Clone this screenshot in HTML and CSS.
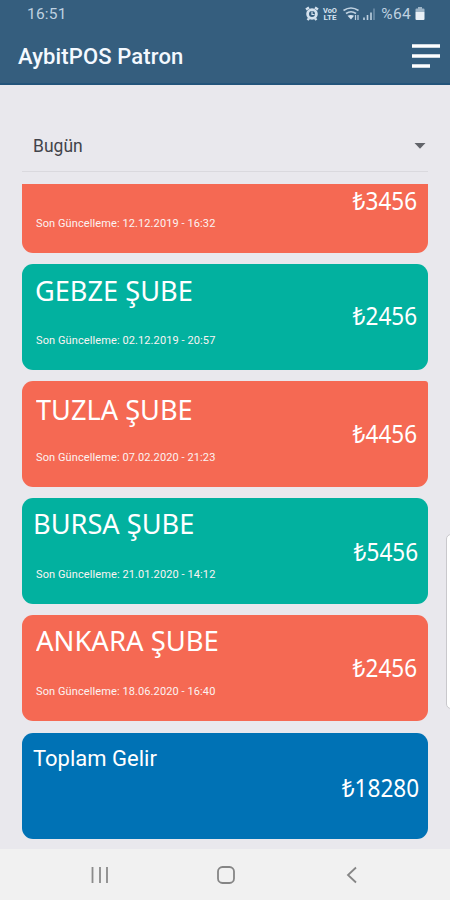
FILE: index.html
```html
<!doctype html>
<html lang="tr">
<head>
<meta charset="utf-8">
<meta name="viewport" content="width=device-width">
<title>AybitPOS Patron</title>
<link rel="stylesheet" href="styles.css">
</head>
<body>

<header>
<div class="statusbar">
<span class="clock">16:51</span>
<svg class="icons" width="70" height="16" viewBox="0 0 70 16">
<!-- alarm -->
<circle cx="7" cy="8" r="4.400" fill="#355e7e" stroke="#d5e2ee" stroke-width="2.800"/>
<path d="M1 3.500L4 1.500M13 3.500L10 1.500M2.500 14l1.500-1.500M11.500 14L10 12.500" stroke="#d5e2ee" stroke-width="2.400"/>
<path d="M7 5.500v3h2.500" fill="none" stroke="#d5e2ee" stroke-width="1.200"/>
<text class="volte" x="18" y="6.500" textLength="14" lengthAdjust="spacingAndGlyphs">VoO</text>
<text class="volte" x="18.500" y="14" textLength="13" lengthAdjust="spacingAndGlyphs">LTE</text>
<!-- wifi -->
<path d="M38.500 4.500Q46-0.500 53.500 4.500M41 7.500Q46 4 51 7.500" fill="none" stroke="#bfd1e0" stroke-width="1.700"/>
<path d="M42.500 9.800Q46 8 49 9.800L46 13.500z" fill="#d5e2ee"/>
<path d="M50.500 9v5M53 9v5" stroke="#bfd1e0" stroke-width="1.200"/>
<!-- signal -->
<path d="M59 11.500v2.500M62.500 9v5M66 6.500v7.500" stroke="#bfd1e0" stroke-width="1.600"/>
<path d="M69 2.500v11.500" stroke="#7091ab" stroke-width="1.500"/>
</svg>
<span class="percent">%64</span>
<svg class="battery" width="10" height="14" viewBox="0 0 10 14">
<path d="M3 0h4v1.500h1.500q1 0 1 1V5h-9V2.500q0-1 1-1H3z" fill="#9db4c6"/>
<path d="M.5 5h9v7q0 1-1 1h-7q-1 0-1-1z" fill="#e9f0f6"/>
</svg>
</div>
<div class="appbar">
<h1>AybitPOS Patron</h1>
<svg width="30" height="26" viewBox="0 0 30 26">
<path d="M1 3h28M1 13h28M1 23h18" stroke="#fff" stroke-width="3.600"/>
</svg>
</div>
</header>

<div class="content">
<div class="period">
<span>Bugün</span>
<svg width="12" height="6" viewBox="0 0 12 6"><path d="M.5 0h11L6 5.800z" fill="#62646a"/></svg>
</div>

<div class="branches">
<div class="card red cut">
<p class="updated">Son Güncelleme: 12.12.2019 - 16:32</p>
<p class="amount">₺3456</p>
</div>
<div class="card green gebze">
<h2>GEBZE ŞUBE</h2>
<p class="updated">Son Güncelleme: 02.12.2019 - 20:57</p>
<p class="amount">₺2456</p>
</div>
<div class="card red square tuzla">
<h2>TUZLA ŞUBE</h2>
<p class="updated">Son Güncelleme: 07.02.2020 - 21:23</p>
<p class="amount">₺4456</p>
</div>
<div class="card green bursa">
<h2>BURSA ŞUBE</h2>
<p class="updated">Son Güncelleme: 21.01.2020 - 14:12</p>
<p class="amount">₺5456</p>
</div>
<div class="card red ankara">
<h2>ANKARA ŞUBE</h2>
<p class="updated">Son Güncelleme: 18.06.2020 - 16:40</p>
<p class="amount">₺2456</p>
</div>
<div class="card blue total">
<h2>Toplam Gelir</h2>
<p class="amount">₺18280</p>
</div>
</div>
</div>

<div class="edgepanel"></div>

<footer>
<svg width="18" height="18" viewBox="0 0 18 18"><path d="M1.500 1v16M9 1v16M16 1v16" stroke="#8b8b8b" stroke-width="1.800"/></svg>
<svg width="18" height="18" viewBox="0 0 18 18"><rect x="1" y="1" width="16" height="16" rx="4.500" fill="none" stroke="#858585" stroke-width="1.800"/></svg>
<svg width="18" height="18" viewBox="0 0 18 18"><path d="M13 1.500L5 9l8 7.500" fill="none" stroke="#858585" stroke-width="1.800"/></svg>
</footer>

</body>
</html>
```
FILE: styles.css
```css
* {box-sizing: border-box;}
body {margin: 0; width: 450px; height: 900px; overflow: hidden; display: flex; flex-direction: column; background: #e9e8ed; font-family: Roboto, "Liberation Sans", sans-serif;}
h1, h2, p {margin: 0; font-weight: normal; white-space: nowrap;}
svg {display: block;}

header {height: 85px; background: #355e7e; border-bottom: 2px solid #23547a; flex: none;}
.statusbar {height: 28px; display: flex; align-items: center; padding: 0 25px 0 27px; color: #bfd1e0;}
.clock {font-size: 15.5px; letter-spacing: .2px;}
.icons {margin-left: auto;}
.volte {font: bold 6.5px Roboto, sans-serif; fill: #d5e2ee;}
.percent {font-size: 15.5px; margin: 0 4px 0 6px; letter-spacing: .3px;}
.appbar {height: 56px; display: flex; align-items: center; justify-content: space-between; padding: 0 9px 0 18px;}
h1 {color: #f4f9ff; font-size: 22px; font-weight: 500; letter-spacing: .13px; padding-top: 1px;}

.content {padding: 34px 22px 0; height: 764px; flex: none;}
.period {height: 53px; margin-bottom: 12.4px; padding: 1px 2px 0 11px; display: flex; align-items: center; justify-content: space-between; border-bottom: 1px solid #dad9de; font-size: 17.5px; color: #42434a;}
.branches {display: flex; flex-direction: column; gap: 11px;}

.card {height: 106px; border-radius: 11px; padding: 0 11px 0 14px; color: #fff; display: grid; grid-template-columns: 1fr auto; grid-template-rows: 70px 36px;}
.cut {height: 69px; border-radius: 0 0 11px 11px; grid-template-rows: 32.5px 36.5px;}
.square {border-top-right-radius: 3px;}
.red {background: #f56953;}
.green {background: #02b19f;}
.blue {background: #0072b5;}

h2 {font-family: "Noto Sans", sans-serif; font-size: 28px; line-height: 40px; padding-top: 6px; grid-column: 1; grid-row: 1; justify-self: start; transform-origin: left top; transform: scaleX(.97);}
.updated {font-size: 11px; line-height: 14px; letter-spacing: .1px; grid-column: 1; grid-row: 2; color: #fbf3f2;}
.amount {font-family: "Noto Sans", sans-serif; font-size: 24.5px; line-height: 34px; grid-column: 2; grid-row: 1 / 3; align-self: center; justify-self: end; transform-origin: right center; transform: scaleX(.92);}
.cut .amount {align-self: start;}

.gebze h2 {margin-left: -1px;}
.gebze .amount {margin-bottom: 3px;}
.tuzla h2 {padding-top: 8px;}
.bursa h2 {margin-left: -3px; padding-top: 5px;}
.bursa {padding-right: 10px;}
.bursa .amount {margin-top: 2px;}
.ankara h2 {padding-top: 5px; transform: scaleX(.98);}
.total {padding-right: 9px; margin-top: .6px;}
.total h2 {font-family: Roboto, sans-serif; font-size: 22px; line-height: 30px; padding-top: 11px; margin-left: -3px; transform: none;}
.total .amount {margin-top: 5px;}

.edgepanel {position: absolute; right: -8px; top: 534px; width: 12px; height: 175px; border: 1px solid #c9c8cc; border-radius: 5px; background: #fff;}

footer {flex: 1; background: #f1f1f1; display: flex; align-items: center; justify-content: space-between; padding: 1px 89px 0 91px;}
```
